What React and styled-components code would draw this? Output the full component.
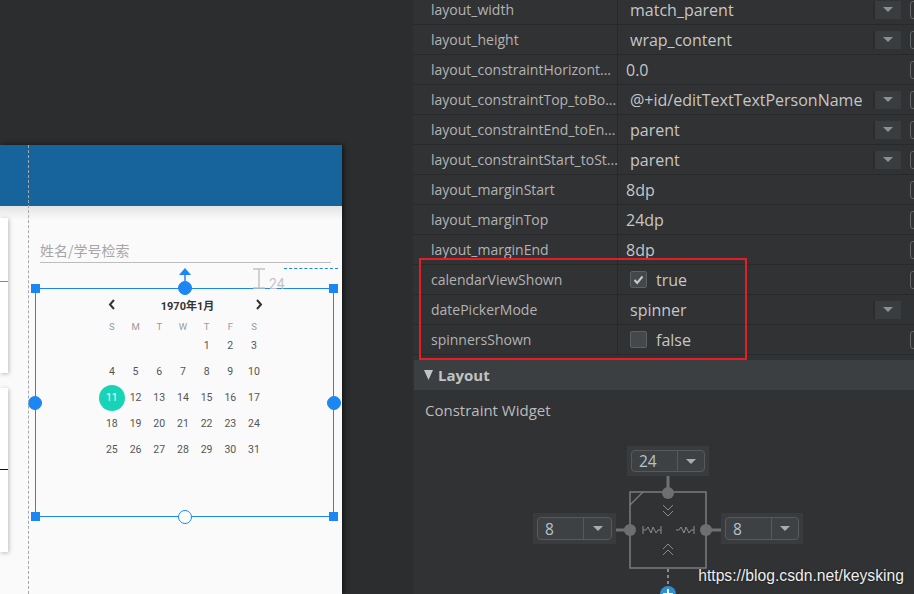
import React from "react";
import styled, { createGlobalStyle } from "styled-components";

const GlobalStyle = createGlobalStyle`
  html, body {
    margin: 0;
    padding: 0;
    background: #2c2d2f;
  }
  body {
    font-family: "Open Sans", "Noto Sans", sans-serif;
  }
`;

const Screen = styled.div`
  width: 914px;
  height: 594px;
  overflow: hidden;
  display: flex;
  background: #2c2d2f;
  position: relative;
`;

/* ---------- design canvas (left) ---------- */

const DesignArea = styled.div`
  width: 413px;
  flex-shrink: 0;
  display: flex;
  flex-direction: column;
  padding-top: 145px;
  box-sizing: border-box;
`;

const Phone = styled.div`
  width: 342px;
  flex: 1;
  position: relative;
  display: flex;
  flex-direction: column;
  background: #fafafa;
  box-shadow: 2px 0 5px rgba(0, 0, 0, 0.55);
`;

const AppBar = styled.div`
  height: 61px;
  flex-shrink: 0;
  background: #17649d;
`;

const Body = styled.div`
  flex: 1;
  display: flex;
  background: linear-gradient(#e4e4e4, #fafafa 14px);
`;

const Guide = styled.div`
  position: absolute;
  left: 28px;
  top: 0;
  bottom: 0;
  border-left: 1px dashed #a8a8a8;
`;

const CardColumn = styled.div`
  width: 8px;
  padding-top: 12px;
  display: flex;
  flex-direction: column;
  gap: 15px;
`;

const Card = styled.div`
  position: relative;
  height: ${(p) => p.$h}px;
  background: #fff;
  box-shadow: 1px 1px 4px rgba(0, 0, 0, 0.25);

  &::after {
    content: "";
    position: absolute;
    left: 0;
    right: 0;
    top: ${(p) => p.$line}px;
    border-top: 1px solid ${(p) => p.$lineColor};
  }
`;

const MainColumn = styled.div`
  margin-left: 27px;
  width: 299px;
  display: flex;
  flex-direction: column;
`;

const SearchField = styled.div`
  margin: 32px 0 0 5px;
  width: 291px;
  height: 24px;
  border-bottom: 1.5px solid #bdbdbd;
  font-family: "Noto Sans CJK SC", sans-serif;
  font-size: 14px;
  line-height: 24px;
  color: #a6a6a6;
`;

const Widget = styled.div`
  position: relative;
  margin-top: 24.5px;
  height: 229px;
  padding-top: 8px;
  box-sizing: border-box;
`;

const CalHeader = styled.div`
  margin-left: 65px;
  width: 166px;
  height: 18px;
  padding: 0 3px 0 8px;
  box-sizing: border-box;
  display: flex;
  align-items: center;
  justify-content: space-between;
`;

const CalTitle = styled.div`
  font-family: "Roboto", "Noto Sans CJK SC", sans-serif;
  font-weight: 700;
  font-size: 11px;
  color: #333;
  margin-left: 4px;
`;

const CalGrid = styled.div`
  margin-left: 65px;
  width: 166px;
  display: grid;
  grid-template-columns: repeat(7, 23.7px);
  font-family: "Roboto", sans-serif;
`;

const DayName = styled.div`
  height: 19px;
  display: flex;
  align-items: flex-end;
  justify-content: center;
  line-height: 12px;
  font-size: 9.5px;
  color: #9a9a9a;
`;

const DateCell = styled.div`
  height: 26px;
  min-width: 0;
  display: flex;
  align-items: center;
  justify-content: center;
  font-size: 10.5px;
  color: ${(p) => (p.$selected ? "#fff" : "#555")};

  span {
    flex-shrink: 0;
    width: 26px;
    height: 26px;
    border-radius: 50%;
    display: flex;
    align-items: center;
    justify-content: center;
    background: ${(p) => (p.$selected ? "#19d3b6" : "transparent")};
  }
`;

const Selection = styled.div`
  position: absolute;
  inset: 0;
  border: 1px solid #1c86f2;
  pointer-events: none;
`;

const SquareHandle = styled.div`
  position: absolute;
  width: 9px;
  height: 9px;
  background: #1c86f2;
  left: ${(p) => (p.$right ? "auto" : "-5px")};
  right: ${(p) => (p.$right ? "-5px" : "auto")};
  top: ${(p) => (p.$bottom ? "auto" : "-5px")};
  bottom: ${(p) => (p.$bottom ? "-5px" : "auto")};
`;

const CircleHandle = styled.div`
  position: absolute;
  width: 14px;
  height: 14px;
  border-radius: 50%;
  box-sizing: border-box;
  background: ${(p) => (p.$hollow ? "#fff" : "#1c86f2")};
  border: 1.5px solid #1c86f2;
`;

const TopHandle = styled(CircleHandle)`
  left: 142px;
  top: -8px;
`;
const BottomHandle = styled(CircleHandle)`
  left: 142px;
  bottom: -8px;
`;
const LeftHandle = styled(CircleHandle)`
  left: -8px;
  top: 107px;
`;
const RightHandle = styled(CircleHandle)`
  right: -8px;
  top: 107px;
`;

const UpArrow = styled.svg`
  position: absolute;
  left: 142px;
  top: -21px;
`;

const MarginBeam = styled.svg`
  position: absolute;
  left: 216px;
  top: -21px;
`;

const MarginLabel = styled.div`
  position: absolute;
  left: 233px;
  top: -13px;
  font-family: "Roboto", sans-serif;
  font-size: 14px;
  line-height: 16px;
  color: #c4c4c4;
`;

const MarginDash = styled.div`
  position: absolute;
  left: 248px;
  width: 54px;
  top: -21px;
  border-top: 1.5px dashed #1c86f2;
`;

/* ---------- attributes panel (right) ---------- */

const Panel = styled.div`
  flex: 1;
  position: relative;
  overflow: hidden;
  display: flex;
  flex-direction: column;
  background: #303234;
  color: #bbbbbb;
  font-size: 14px;

  & > * {
    flex-shrink: 0;
  }
`;

const Rows = styled.div`
  margin-top: -5px;
  width: 509px;
`;

const Row = styled.div`
  height: 30px;
  box-sizing: border-box;
  display: grid;
  grid-template-columns: 205px 1fr;
  border-bottom: 1px solid #27292b;
`;

const Label = styled.div`
  padding-left: 18px;
  display: flex;
  align-items: center;
  white-space: nowrap;
  border-right: 1px solid #27292b;
  color: #b3b3b3;
`;

const ValueCell = styled.div`
  display: flex;
  align-items: center;
  padding-left: ${(p) => (p.$plain ? 8 : 12)}px;
`;

const ValueText = styled.div`
  flex: 1;
  white-space: nowrap;
  color: #c6c6c6;
  font-size: 16px;
`;

const Dropdown = styled.div`
  width: 28px;
  height: 18px;
  box-sizing: border-box;
  background: #3a3d3f;
  border-left: 2px solid #2a2c2e;
  display: flex;
  align-items: center;
  justify-content: center;
`;

const Caret = styled.div`
  width: 0;
  height: 0;
  border-left: 5px solid transparent;
  border-right: 5px solid transparent;
  border-top: 5px solid ${(p) => p.$color || "#8e9092"};
`;

const EndBox = styled.div`
  margin-left: 9px;
  width: 12px;
  height: 18px;
  box-sizing: border-box;
  border: 1px solid #66686a;
  border-radius: 3px;
  visibility: ${(p) => (p.$hidden ? "hidden" : "visible")};
`;

const Check = styled.div`
  width: 17px;
  height: 17px;
  box-sizing: border-box;
  border: 1px solid #5d6063;
  border-radius: 2px;
  background: #45484b;
  margin-right: 9px;
  display: flex;
  align-items: center;
  justify-content: center;
`;

const CheckRow = styled.div`
  flex: 1;
  display: flex;
  align-items: center;
  color: #c6c6c6;
  font-size: 16px;
`;

const Highlight = styled.div`
  position: absolute;
  left: 6px;
  top: 258px;
  width: 328px;
  height: 102px;
  box-sizing: border-box;
  border: 2px solid #e41e26;
`;

const SectionHeader = styled.div`
  margin: 5px 0 0 1px;
  height: 30px;
  background: #3c3f41;
  display: flex;
  align-items: center;
  gap: 5px;
  padding-left: 10px;
  font-weight: 700;
  font-size: 15px;
  color: #c3c3c3;
  line-height: 26px;
`;

const SectionLabel = styled.div`
  margin: 12px 0 0 12px;
  line-height: 16px;
  font-size: 15px;
  color: #bcbcbc;
`;

const Constraint = styled.div`
  margin: 28px 0 0 120px;
  width: 270px;
  display: flex;
  flex-direction: column;
`;

const MiddleRow = styled.div`
  display: flex;
  align-items: flex-start;
`;

const NumPlate = styled.div`
  margin: ${(p) => p.$margin};
  width: ${(p) => p.$w}px;
  height: ${(p) => p.$h}px;
  padding: 4px;
  box-sizing: border-box;
  background: #393b3d;
`;

const NumBox = styled.div`
  height: 100%;
  box-sizing: border-box;
  border: 1px solid #57595c;
  border-radius: 4px;
  background: #3e4143;
  display: flex;
`;

const NumValue = styled.div`
  width: 46px;
  padding-left: 7px;
  box-sizing: border-box;
  display: flex;
  align-items: center;
  border-right: 1px solid #57595c;
  font-size: 15.5px;
  color: #b4c2cf;
`;

const NumCaret = styled.div`
  flex: 1;
  display: flex;
  align-items: center;
  justify-content: center;
`;

const Watermark = styled.div`
  position: absolute;
  right: 10px;
  bottom: 9px;
  font-family: "Liberation Sans", Arial, sans-serif;
  font-size: 15.7px;
  color: #eeeeee;
  text-shadow: 0 0 2px rgba(0, 0, 0, 0.8);
`;

const Chevron = ({ dir }) => (
  <svg width="8" height="11" viewBox="0 0 8 11">
    <polyline
      points={dir === "left" ? "6,1 2,5.5 6,10" : "2,1 6,5.5 2,10"}
      fill="none"
      stroke="#333"
      strokeWidth="2"
    />
  </svg>
);

const Num = ({ value, w, h, margin }) => (
  <NumPlate $w={w} $h={h} $margin={margin}>
    <NumBox>
      <NumValue>{value}</NumValue>
      <NumCaret>
        <Caret $color="#a9abad" />
      </NumCaret>
    </NumBox>
  </NumPlate>
);

const ConstraintDrawing = () => (
  <svg width="105" height="125" viewBox="0 0 105 125">
    <g stroke="#6f7072" fill="none">
      <line x1="52" y1="0" x2="52" y2="12" strokeWidth="3" />
      <line x1="0" y1="54" x2="10" y2="54" strokeWidth="3" />
      <line x1="95" y1="54" x2="105" y2="54" strokeWidth="3" />
      <rect x="14" y="16" width="76" height="76" strokeWidth="1.5" stroke="#7b7c7e" />
      <line x1="14" y1="29" x2="27" y2="16" strokeWidth="1.2" stroke="#7b7c7e" />
      <g stroke="#8a8b8d" strokeWidth="1">
        <polyline points="47,29 52,34 57,29" />
        <polyline points="47,35 52,40 57,35" />
        <polyline points="47,73 52,68 57,73" />
        <polyline points="47,79 52,74 57,79" />
        <line x1="27" y1="50" x2="27" y2="58" />
        <polyline points="27,54 30,54 32,51 35,57 37,51 40,57 42,54 45,54" />
        <line x1="45" y1="50" x2="45" y2="58" />
        <polyline points="60,54 63,54 65,51 68,57 70,51 73,57 75,54 78,54" />
        <line x1="78" y1="50" x2="78" y2="58" />
      </g>
      <line x1="52" y1="93" x2="52" y2="110" strokeWidth="2" strokeDasharray="3 3" stroke="#8a8b8d" />
    </g>
    <g fill="#6e6f71">
      <circle cx="52" cy="17" r="6" />
      <circle cx="14" cy="54" r="6" />
      <circle cx="90" cy="54" r="6" />
    </g>
    <circle cx="52" cy="118" r="8" fill="#2f8fd0" />
    <path d="M52 113 V123 M47 118 H57" stroke="#fff" strokeWidth="2" />
  </svg>
);

const weeks = [
  ["", "", "", "", "1", "2", "3"],
  ["4", "5", "6", "7", "8", "9", "10"],
  ["11", "12", "13", "14", "15", "16", "17"],
  ["18", "19", "20", "21", "22", "23", "24"],
  ["25", "26", "27", "28", "29", "30", "31"],
];

const attributes = [
  { name: "layout_width", value: "match_parent", dropdown: true },
  { name: "layout_height", value: "wrap_content", dropdown: true },
  { name: "layout_constraintHorizont...", value: "0.0", plain: true },
  { name: "layout_constraintTop_toBo...", value: "@+id/editTextTextPersonName", dropdown: true },
  { name: "layout_constraintEnd_toEn...", value: "parent", dropdown: true },
  { name: "layout_constraintStart_toSt...", value: "parent", dropdown: true },
  { name: "layout_marginStart", value: "8dp", plain: true },
  { name: "layout_marginTop", value: "24dp", plain: true },
  { name: "layout_marginEnd", value: "8dp", plain: true },
  { name: "calendarViewShown", check: true, value: "true" },
  { name: "datePickerMode", value: "spinner", dropdown: true, noBox: true },
  { name: "spinnersShown", check: false, value: "false" },
];

const AttributeRow = ({ attr }) => (
  <Row>
    <Label>{attr.name}</Label>
    <ValueCell $plain={attr.plain}>
      {attr.check !== undefined ? (
        <CheckRow>
          <Check>
            {attr.check && (
              <svg width="11" height="10" viewBox="0 0 11 10">
                <polyline points="1.5,5 4.2,8 9.5,1.5" fill="none" stroke="#c9c9c9" strokeWidth="2" />
              </svg>
            )}
          </Check>
          {attr.value}
        </CheckRow>
      ) : (
        <ValueText>{attr.value}</ValueText>
      )}
      {attr.dropdown && (
        <Dropdown>
          <Caret />
        </Dropdown>
      )}
      <EndBox $hidden={attr.noBox} />
    </ValueCell>
  </Row>
);

export default function App() {
  return (
    <Screen>
      <GlobalStyle />
      <DesignArea>
        <Phone>
          <AppBar />
          <Body>
            <CardColumn>
              <Card $h={155} $line={63} $lineColor="#8a8a8a" />
              <Card $h={164} $line={81} $lineColor="#111" />
            </CardColumn>
            <MainColumn>
              <SearchField>姓名/学号检索</SearchField>
              <Widget>
                <CalHeader>
                  <Chevron dir="left" />
                  <CalTitle>1970年1月</CalTitle>
                  <Chevron dir="right" />
                </CalHeader>
                <CalGrid>
                  {["S", "M", "T", "W", "T", "F", "S"].map((d, i) => (
                    <DayName key={i}>{d}</DayName>
                  ))}
                  {weeks.flat().map((d, i) => (
                    <DateCell key={i} $selected={d === "11"}>
                      <span>{d}</span>
                    </DateCell>
                  ))}
                </CalGrid>
                <Selection>
                  <SquareHandle />
                  <SquareHandle $right />
                  <SquareHandle $bottom />
                  <SquareHandle $right $bottom />
                  <TopHandle />
                  <BottomHandle $hollow />
                  <LeftHandle />
                  <RightHandle />
                  <UpArrow width="14" height="14" viewBox="0 0 14 14">
                    <polygon points="7,0 13,7 1,7" fill="#1c86f2" />
                    <line x1="7" y1="7" x2="7" y2="13" stroke="#1c86f2" strokeWidth="1.5" />
                  </UpArrow>
                  <MarginBeam width="14" height="21" viewBox="0 0 14 21">
                    <path d="M1 1 H13 M7 1 V20 M1 20 H13" stroke="#c4c4c4" strokeWidth="1.5" fill="none" />
                  </MarginBeam>
                  <MarginLabel>24</MarginLabel>
                  <MarginDash />
                </Selection>
              </Widget>
            </MainColumn>
          </Body>
          <Guide />
        </Phone>
      </DesignArea>

      <Panel>
        <Rows>
          {attributes.map((a) => (
            <AttributeRow key={a.name} attr={a} />
          ))}
        </Rows>
        <SectionHeader>
          <svg width="9" height="10" viewBox="0 0 9 10">
            <polygon points="0,0 9,0 4.5,10" fill="#c3c3c3" />
          </svg>
          Layout
        </SectionHeader>
        <SectionLabel>Constraint Widget</SectionLabel>
        <Constraint>
          <Num value="24" w={82} h={30} margin="0 0 0 94px" />
          <MiddleRow>
            <Num value="8" w={83} h={31} margin="37px 0 0 0" />
            <ConstraintDrawing />
            <Num value="8" w={82} h={31} margin="37px 0 0 0" />
          </MiddleRow>
        </Constraint>
        <Highlight />
        <Watermark>https://blog.csdn.net/keysking</Watermark>
      </Panel>
    </Screen>
  );
}
